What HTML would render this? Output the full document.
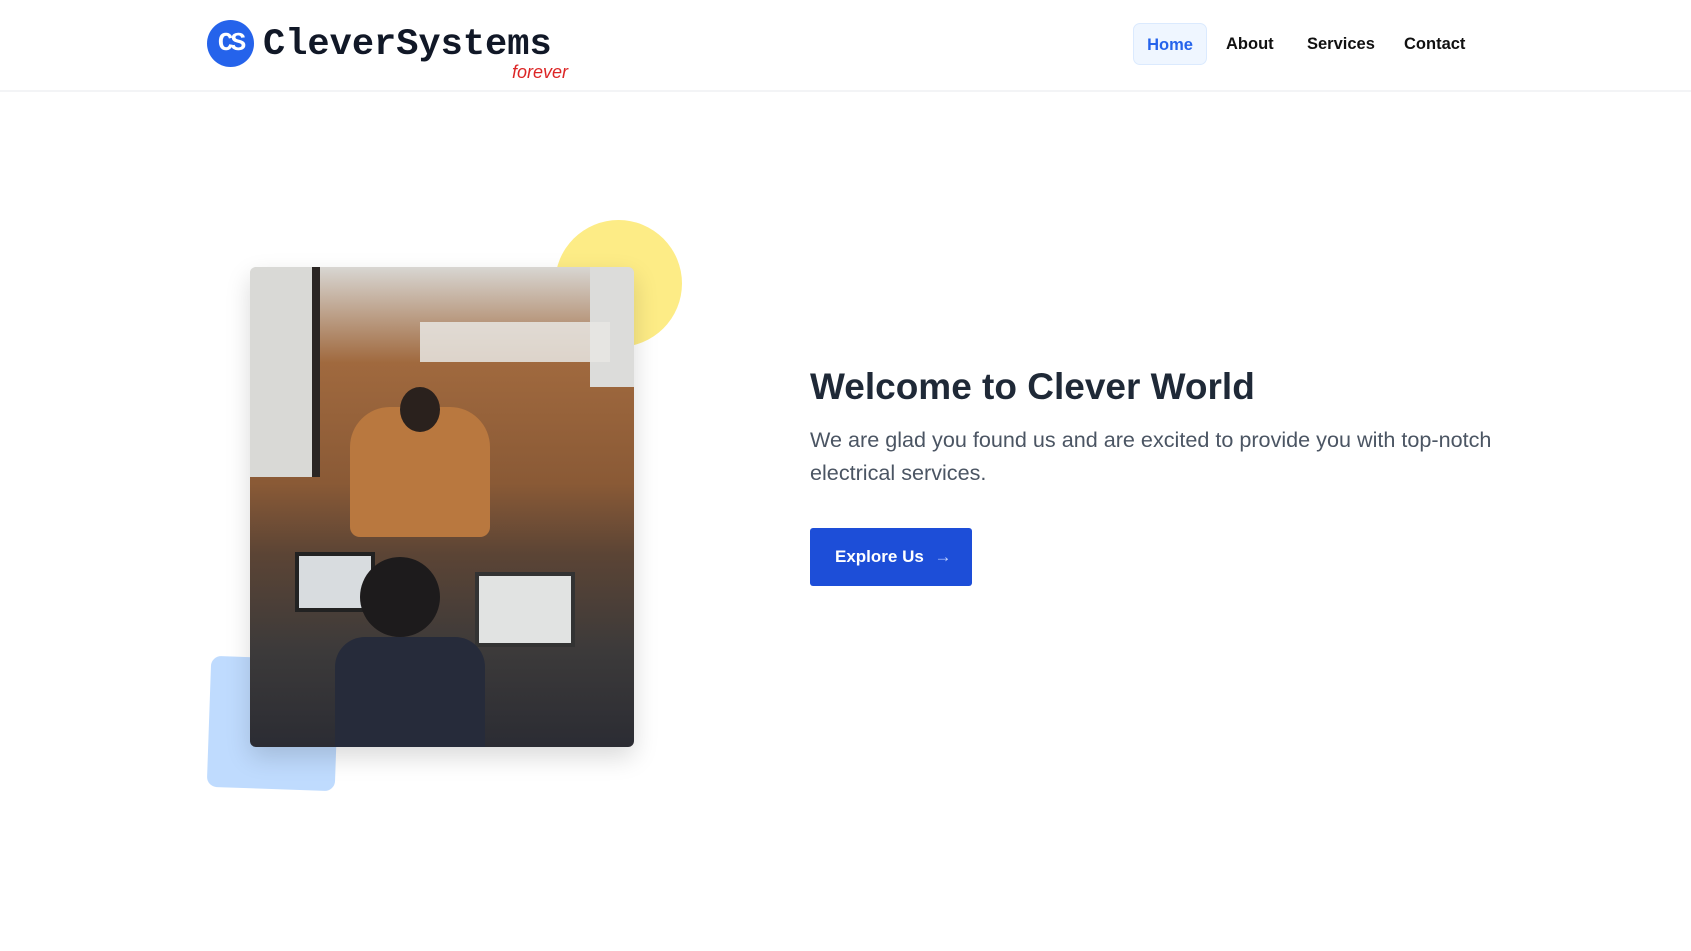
<!DOCTYPE html>
<html><head><meta charset="utf-8"><style>
*{margin:0;padding:0;box-sizing:border-box}
body{width:1691px;height:951px;background:#fff;font-family:"Liberation Sans",sans-serif;position:relative;overflow:hidden}
header{position:absolute;left:0;top:0;width:1691px;height:92px;border-bottom:2px solid #f3f4f6}
.logo{position:absolute;left:207px;top:20px;width:47px;height:47px;border-radius:50%;background:#2563eb;color:#fff;font:bold 26px "Liberation Mono",monospace;text-align:center;line-height:47px;letter-spacing:-3px}
.brand{position:absolute;left:263px;top:24px;font:bold 37px "Liberation Mono",monospace;color:#111827}
.forever{position:absolute;left:512px;top:62px;font:italic 18px "Liberation Sans",sans-serif;color:#dc2626}
nav a{position:absolute;top:23px;height:42px;line-height:42px;font-size:16.5px;font-weight:bold;color:#111;text-decoration:none}
.home{left:1133px;width:74px;text-align:center;background:#eff6ff;border:1px solid #dbeafe;border-radius:7px;color:#2563eb}
.img{position:absolute;left:250px;top:267px;width:384px;height:480px;border-radius:6px;overflow:hidden;box-shadow:0 10px 25px rgba(0,0,0,.15);
background:linear-gradient(180deg,#d8d6d2 0%,#a0693e 20%,#8a5a36 45%,#5b4435 60%,#3c3a3a 80%,#2b2c33 100%)}
h1{position:absolute;left:810px;top:366px;font-size:37px;color:#1f2937;font-weight:bold}
p{position:absolute;left:810px;top:423px;width:760px;font-size:21.6px;line-height:33px;color:#4b5563}
.btn{position:absolute;left:810px;top:528px;width:162px;height:58px;background:#1d4ed8;border-radius:3px;color:#fff;font-size:17px;font-weight:bold;line-height:58px;padding-left:25px}
</style></head><body>
<header>
<div class="logo">CS</div>
<div class="brand">CleverSystems</div>
<div class="forever">forever</div>
<nav>
<a class="home">Home</a>
<a style="left:1226px">About</a>
<a style="left:1307px">Services</a>
<a style="left:1404px">Contact</a>
</nav>
</header>
<div style="position:absolute;left:555px;top:220px;width:127px;height:127px;border-radius:50%;background:#fdec86"></div>
<div style="position:absolute;left:209px;top:658px;width:128px;height:131px;border-radius:10px;background:#bfdbfe;transform:rotate(2deg)"></div>
<div class="img">
<div style="position:absolute;left:0;top:0;width:70px;height:210px;background:#d9d9d6;border-right:8px solid #2a2523"></div>
<div style="position:absolute;left:340px;top:0;width:44px;height:120px;background:#dcdcda"></div>
<div style="position:absolute;left:170px;top:55px;width:190px;height:40px;background:#e8e6e3;opacity:.85"></div>
<div style="position:absolute;left:100px;top:140px;width:140px;height:130px;background:#b9783f;border-radius:40px 40px 10px 10px"></div>
<div style="position:absolute;left:150px;top:120px;width:40px;height:45px;background:#2a211d;border-radius:50%"></div>
<div style="position:absolute;left:45px;top:285px;width:80px;height:60px;background:#d8dcdf;border:4px solid #222"></div>
<div style="position:absolute;left:225px;top:305px;width:100px;height:75px;background:#e1e3e2;border:4px solid #333"></div>
<div style="position:absolute;left:110px;top:290px;width:80px;height:80px;background:#1d1b1c;border-radius:50%"></div>
<div style="position:absolute;left:85px;top:370px;width:150px;height:110px;background:#262b3a;border-radius:30px 30px 0 0"></div>
</div>
<h1>Welcome to Clever World</h1>
<p>We are glad you found us and are excited to provide you with top-notch electrical services.</p>
<div class="btn">Explore Us <span style="font-weight:normal;color:#bfd0ff;margin-left:6px">→</span></div>
</body></html>
